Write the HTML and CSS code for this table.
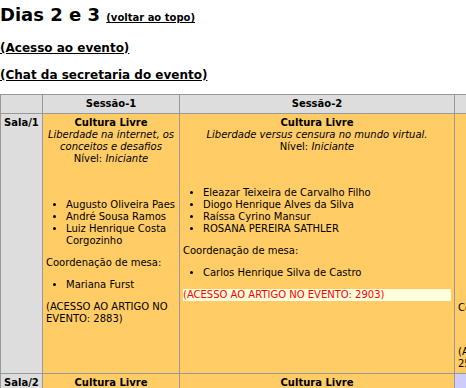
FILE: index.html
```html
<!DOCTYPE html>
<html lang="pt-BR">
<head>
<meta charset="utf-8">
<title>Programação - Dias 2 e 3</title>
<link rel="stylesheet" href="styles.css">
</head>
<body>
<h2 class="day-title">Dias 2 e 3 <a class="top-link" href="#topo">(voltar ao topo)</a></h2>
<p class="event-link"><a href="#evento">(Acesso ao evento)</a></p>
<p class="event-link last"><a href="#chat">(Chat da secretaria do evento)</a></p>
<table class="grade">
<colgroup><col class="c-sala"><col class="c-s1"><col class="c-s2"><col class="c-s3"></colgroup>
<thead>
<tr><th></th><th>Sessão-1</th><th>Sessão-2</th><th>Sessão-3</th></tr>
</thead>
<tbody>
<tr>
<th class="sala">Sala/1</th>
<td class="livre">
<div class="cab"><b>Cultura Livre</b><br><i>Liberdade na internet, os conceitos e desafios</i><br>Nível: <i>Iniciante</i></div>
<br><br>
<ul>
<li>Augusto Oliveira Paes</li>
<li>André Sousa Ramos</li>
<li>Luiz Henrique Costa Corgozinho</li>
</ul>
Coordenação de mesa:
<ul><li>Mariana Furst</li></ul>
<div class="artigo">(ACESSO AO ARTIGO NO EVENTO: 2883)</div>
</td>
<td class="livre">
<div class="cab"><b>Cultura Livre</b><br><i>Liberdade versus censura no mundo virtual.</i><br>Nível: <i>Iniciante</i></div>
<br><br>
<ul>
<li>Eleazar Teixeira de Carvalho Filho</li>
<li>Diogo Henrique Alves da Silva</li>
<li>Raíssa Cyrino Mansur</li>
<li>ROSANA PEREIRA SATHLER</li>
</ul>
Coordenação de mesa:
<ul><li>Carlos Henrique Silva de Castro</li></ul>
<div class="artigo ativo">(ACESSO AO ARTIGO NO EVENTO: 2903)</div>
</td>
<td class="livre">
<div class="cab"><b>Cultura Livre</b><br><i>Software livre, educação<br>e inclusão digital</i><br>Nível: <i>Intermediário</i></div>
<br><br>
<ul class="lista-larga lista-curta">
<li>Fernanda Lima Bastos</li>
<li>Ricardo Moreira Tavares</li>
<li>Paula Cristina Nogueira</li>
<li>João Pedro Albuquerque</li>
<li>Marcos Vinícius Rocha</li>
<li>Helena Duarte Campos</li>
<li>Tiago Ferreira Mendes</li>
<li>Beatriz Andrade Souza</li>
</ul>
Coordenação de mesa:
<ul class="lista-larga"><li>Renata Oliveira Prado</li></ul>
<div class="artigo">(ACESSO AO ARTIGO NO EVENTO: 2571)</div>
</td>
</tr>
<tr>
<th class="sala">Sala/2</th>
<td class="livre">
<div class="cab"><b>Cultura Livre</b><br><i>Direitos autorais e compartilhamento</i><br>Nível: <i>Iniciante</i></div>
</td>
<td class="livre">
<div class="cab"><b>Cultura Livre</b><br><i>Redes colaborativas e produção cultural</i><br>Nível: <i>Iniciante</i></div>
</td>
<td class="outra">
<div class="cab"><b>Educação</b><br><i>Recursos educacionais abertos</i><br>Nível: <i>Iniciante</i></div>
</td>
</tr>
</tbody>
</table>
</body>
</html>
```
FILE: styles.css
```css
html {
  overflow: hidden;
}

body {
  margin: 0;
  font-family: "DejaVu Sans", Verdana, sans-serif;
  font-size: 12px;
  color: #000;
  background: #fff;
}

a {
  color: #000;
}

.day-title {
  font-size: 18px;
  margin: 4px 0 16px;
}

.top-link {
  font-size: 10px;
}

.event-link {
  margin: 0 0 13px;
  font-weight: bold;
}

.event-link.last {
  margin-bottom: 12px;
}

.grade {
  border-collapse: collapse;
  table-layout: fixed;
  width: 644px;
  font-size: 10px;
  line-height: 12px;
}

.c-sala { width: 42px; }
.c-s1 { width: 137px; }
.c-s2 { width: 275px; }
.c-s3 { width: 190px; }

.grade th,
.grade td {
  border: 1px solid #999;
  padding: 3px;
  vertical-align: top;
}

.grade thead th {
  background: #ddd;
  text-align: center;
}

.sala {
  background: #ddd;
  text-align: left;
}

.livre {
  background: #fc6;
}

.outra {
  background: #ccf;
}

.cab {
  text-align: center;
}

.grade ul {
  margin: 10px 0;
  padding-left: 20px;
}

.grade ul.lista-larga {
  padding-left: 24px;
}

.grade ul.lista-curta {
  margin-top: 7px;
}

.artigo {
  margin-top: 10px;
}

.artigo.ativo {
  color: #f00;
  background: #ffd;
}
```
